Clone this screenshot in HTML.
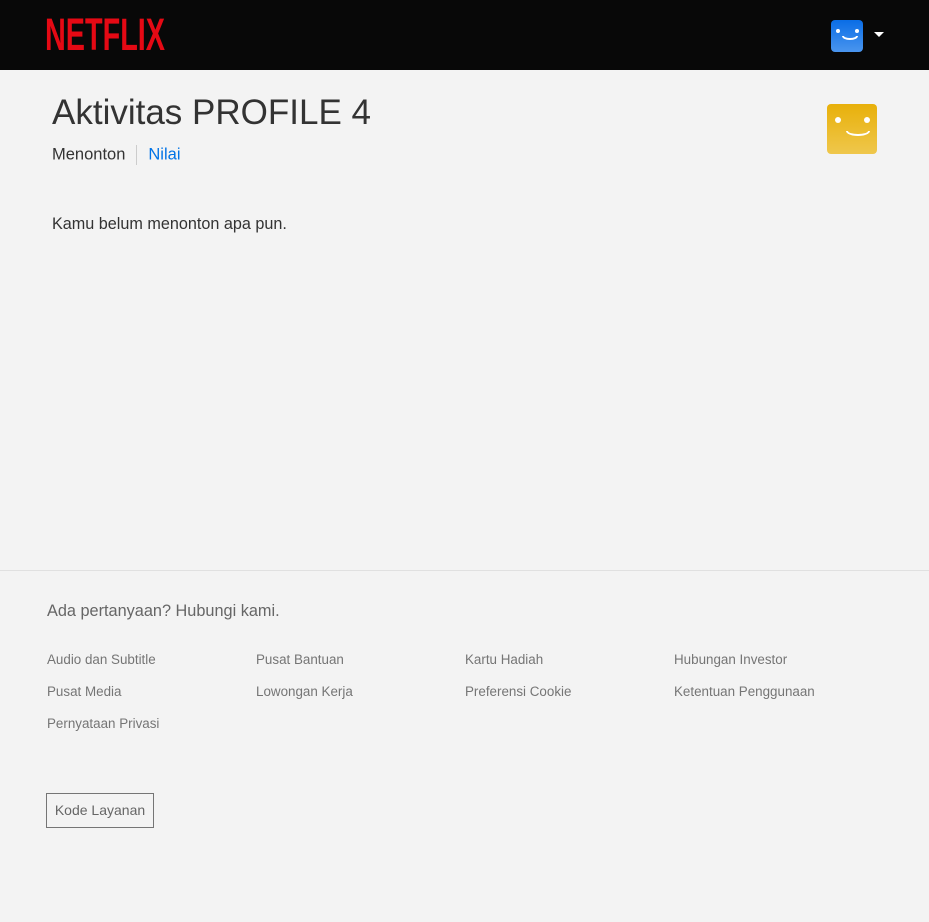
<!DOCTYPE html>
<html><head><meta charset="utf-8"><style>
*{margin:0;padding:0;box-sizing:border-box}
body{width:929px;height:922px;background:#f3f3f3;font-family:"Liberation Sans",Arial,sans-serif;position:relative;overflow:hidden}
.hdr{position:absolute;left:0;top:0;width:929px;height:70px;background:#080808}
.logo{position:absolute;left:45px;top:12px;color:#e50914;font-weight:bold;font-size:45px;transform:scaleX(0.64);transform-origin:left top;line-height:45px}
.av{position:absolute;border-radius:4px}
.av .e{position:absolute;background:#fff;border-radius:50%}
.av .m{position:absolute;border:2px solid #fff;border-top:none;border-radius:0 0 50% 50%/0 0 100% 100%}
h1{position:absolute;left:52px;top:93px;font-weight:normal;font-size:35px;color:#333}
.tabs{position:absolute;left:52px;top:145px;font-size:16.5px;color:#333}
.tabs span.s{display:inline-block;width:1px;height:20px;background:#ccc;vertical-align:middle;margin:0 11px}
.tabs a{color:#0073e6}
.msg{position:absolute;left:52px;top:215px;font-size:16.2px;color:#333}
.line{position:absolute;left:0;top:570px;width:929px;height:1px;background:#e0e0e0}
.q{position:absolute;left:47px;top:602px;font-size:16.3px;color:#666}
.f{position:absolute;font-size:13.4px;color:#757575}
.btn{position:absolute;left:46px;top:793px;width:108px;height:35px;border:1px solid #757575;font-size:14px;color:#666;text-align:center;line-height:33px}
</style></head><body>
<div class="hdr">
<div class="logo">NETFLIX</div>
<div class="av" style="left:831px;top:20px;width:32px;height:32px;background:linear-gradient(#0a6de6,#4a95ee)">
<div class="e" style="left:5px;top:9px;width:4px;height:4px"></div>
<div class="e" style="left:24px;top:9px;width:4px;height:4px"></div>
<div class="m" style="left:11px;top:16px;width:16px;height:4px"></div>
</div>
<div style="position:absolute;left:874px;top:32px;width:0;height:0;border-left:5px solid transparent;border-right:5px solid transparent;border-top:5px solid #fff"></div>
</div>
<h1>Aktivitas PROFILE 4</h1>
<div class="av" style="left:827px;top:104px;width:50px;height:50px;background:linear-gradient(#e8b00a,#efc74c)">
<div class="e" style="left:8px;top:13px;width:6px;height:6px"></div>
<div class="e" style="left:37px;top:13px;width:6px;height:6px"></div>
<div class="m" style="left:19px;top:27px;width:24px;height:5px;border-width:2px"></div>
</div>
<div class="tabs">Menonton<span class="s"></span><a>Nilai</a></div>
<div class="msg">Kamu belum menonton apa pun.</div>
<div class="line"></div>
<div class="q">Ada pertanyaan? Hubungi kami.</div>
<div class="f" style="left:47px;top:652px">Audio dan Subtitle</div>
<div class="f" style="left:256px;top:652px">Pusat Bantuan</div>
<div class="f" style="left:465px;top:652px">Kartu Hadiah</div>
<div class="f" style="left:674px;top:652px">Hubungan Investor</div>
<div class="f" style="left:47px;top:684px">Pusat Media</div>
<div class="f" style="left:256px;top:684px">Lowongan Kerja</div>
<div class="f" style="left:465px;top:684px">Preferensi Cookie</div>
<div class="f" style="left:674px;top:684px">Ketentuan Penggunaan</div>
<div class="f" style="left:47px;top:716px">Pernyataan Privasi</div>
<div class="btn">Kode Layanan</div>
</body></html>
